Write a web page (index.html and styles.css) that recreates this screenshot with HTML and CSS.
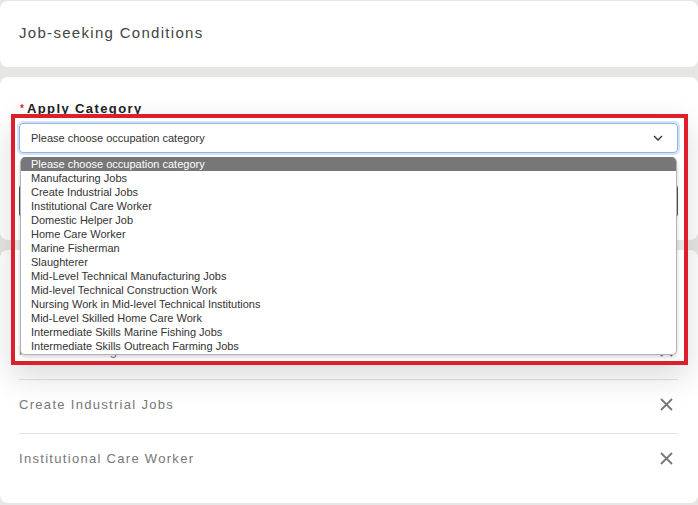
FILE: index.html
```html
<!DOCTYPE html>
<html lang="en">
<head>
<meta charset="UTF-8" />
<meta name="viewport" content="width=device-width, initial-scale=1" />
<title>Job-seeking Conditions</title>
<link rel="stylesheet" href="styles.css">
</head>
<body>

<div class="card card-head">
  <h2 class="card-title">Job-seeking Conditions</h2>
</div>

<div class="card card-form">
  <label class="field-label"><span class="req">*</span>Apply Category</label>
  <div class="select-wrap">
    <div class="select-box">
      <span>Please choose occupation category</span>
      <svg class="chevron" width="10" height="6" viewBox="0 0 10 6"><path d="M1 1l4 4 4-4" fill="none" stroke="#333" stroke-width="1.4"/></svg>
    </div>
    <ul class="select-list">
      <li class="active">Please choose occupation category</li>
      <li>Manufacturing Jobs</li>
      <li>Create Industrial Jobs</li>
      <li>Institutional Care Worker</li>
      <li>Domestic Helper Job</li>
      <li>Home Care Worker</li>
      <li>Marine Fisherman</li>
      <li>Slaughterer</li>
      <li>Mid-Level Technical Manufacturing Jobs</li>
      <li>Mid-level Technical Construction Work</li>
      <li>Nursing Work in Mid-level Technical Institutions</li>
      <li>Mid-Level Skilled Home Care Work</li>
      <li>Intermediate Skills Marine Fishing Jobs</li>
      <li>Intermediate Skills Outreach Farming Jobs</li>
    </ul>
    <!-- marcação em vermelho -->
    <div class="highlight"></div>
  </div>
  <div class="field-box"></div>
</div>

<div class="card card-list">
  <div class="chosen-row">
    <span>Manufacturing Jobs</span>
    <button class="remove" title="Remove"><svg width="13" height="13" viewBox="0 0 13 13"><path d="M1 1l11 11M12 1L1 12" stroke="#777" stroke-width="1.8"/></svg></button>
  </div>
  <div class="chosen-row">
    <span>Create Industrial Jobs</span>
    <button class="remove" title="Remove"><svg width="13" height="13" viewBox="0 0 13 13"><path d="M1 1l11 11M12 1L1 12" stroke="#777" stroke-width="1.8"/></svg></button>
  </div>
  <div class="chosen-row">
    <span>Institutional Care Worker</span>
    <button class="remove" title="Remove"><svg width="13" height="13" viewBox="0 0 13 13"><path d="M1 1l11 11M12 1L1 12" stroke="#777" stroke-width="1.8"/></svg></button>
  </div>
</div>

</body>
</html>
```

FILE: styles.css
```css
body { margin: 0; background: #e6e6e4; font-family: "Liberation Sans", Arial, sans-serif; }
.card { background: #fff; border-radius: 8px; }

.card-head { margin-top: 1px; height: 66px; padding: 22px 20px 0 19px; box-sizing: border-box; }
.card-title { margin: 0; font-size: 15px; font-weight: normal; line-height: 20px; letter-spacing: 1.3px; color: #444; }

.card-form { margin-top: 10px; padding: 24px 20px 22px 19px; }
.field-label { display: block; font-size: 13px; font-weight: bold; line-height: 16px; letter-spacing: 1.4px; color: #222; padding-left: 1px; }
.req { color: #e0282f; font-size: 10px; vertical-align: top; margin-right: 3px; letter-spacing: 0; }

.select-wrap { position: relative; margin-top: 6px; }
.select-box {
  height: 30px; box-sizing: border-box; border: 1px solid #8db4e2; border-radius: 4px;
  box-shadow: 0 0 0 2px #d3e3f6; display: flex; align-items: center; justify-content: space-between;
  padding: 0 14px 0 11px; font-size: 11px; color: #333;
}
.select-list {
  position: absolute; left: 1px; right: 1px; top: 34px; margin: 0; padding: 0 0 1px; list-style: none;
  background: #fff; border: 1px solid #b4b4b4; border-top: 0; border-radius: 5px; box-shadow: 0 2px 4px rgba(0,0,0,0.18);
  overflow: hidden; font-size: 11px; line-height: 14px; color: #333; z-index: 3;
}
.select-list li { padding-left: 10px; }
.select-list li.active { background: #777; color: #fff; }

/* moldura vermelha de destaque */
.highlight {
  position: absolute; left: -8px; top: -9px; width: 677px; height: 251px; box-sizing: border-box;
  border: 4px solid #dc1f2b; box-shadow: 0 12px 30px rgba(0,0,0,0.14); pointer-events: none; z-index: 4;
}

.field-box { margin-top: 31px; height: 34px; border: 1px solid #555; border-radius: 4px; box-sizing: border-box; }

.card-list { margin-top: 10px; padding: 75px 20px 16px 19px; }
.chosen-row {
  display: flex; align-items: center; justify-content: space-between; height: 54px; padding-bottom: 4px;
  box-sizing: border-box; font-size: 13px; letter-spacing: 1.3px; color: #777;
}
.chosen-row + .chosen-row { border-top: 1px solid #e3e3e3; }
.remove { background: none; border: none; padding: 0; margin-right: 5px; cursor: pointer; display: flex; }
```
